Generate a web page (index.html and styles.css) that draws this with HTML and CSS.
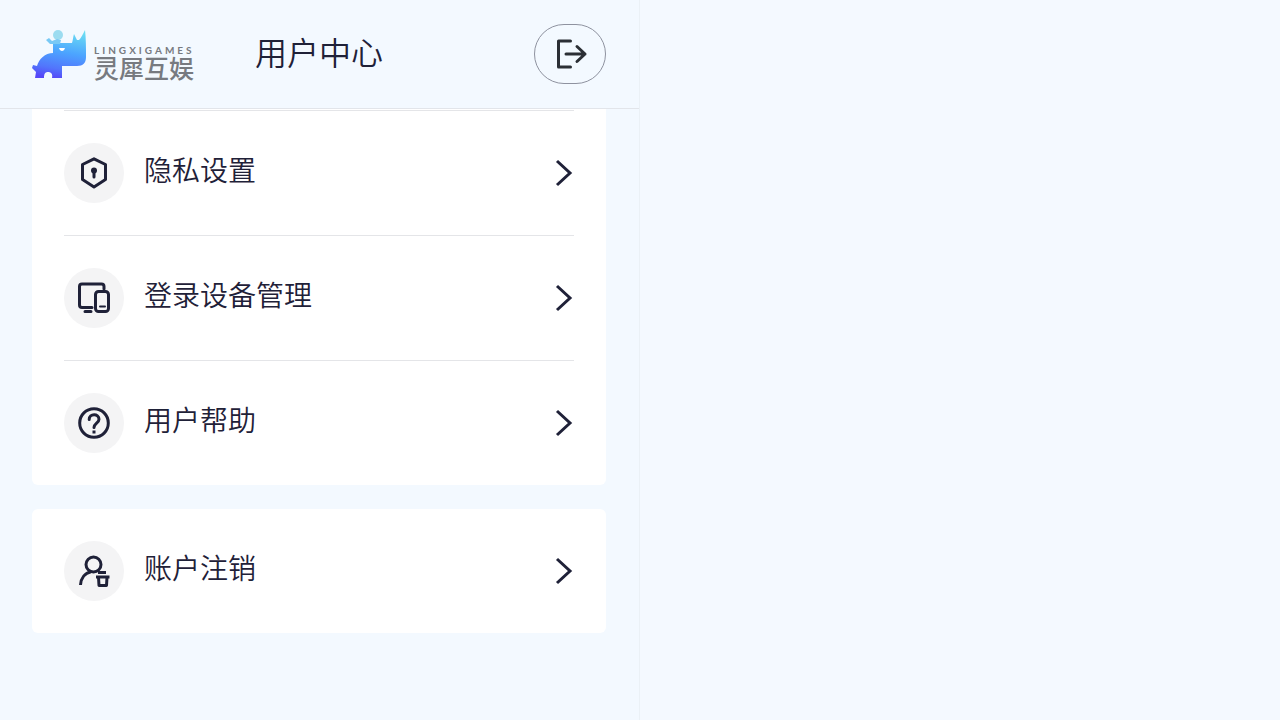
FILE: index.html
```html
<!DOCTYPE html>
<html lang="zh-CN">
<head>
<meta charset="utf-8">
<meta name="viewport" content="width=device-width, initial-scale=1">
<title>用户中心</title>
<link rel="stylesheet" href="styles.css">
</head>
<body>
<div class="app">
  <header class="topbar">
    <div class="brand">
      <svg class="brand-mark" viewBox="0 0 56 50" aria-hidden="true">
        <defs>
          <linearGradient id="rhino" x1="0.6" y1="0" x2="0.4" y2="1">
            <stop offset="0" stop-color="#6adcf3"/>
            <stop offset="0.45" stop-color="#4ca4ff"/>
            <stop offset="0.8" stop-color="#5275fc"/>
            <stop offset="1" stop-color="#5648f8"/>
          </linearGradient>
        </defs>
        <path fill="url(#rhino)" d="M3 49L4 43L0 39L1 36L5 37C7 30 13 24 21 24V14H40C41 11 41 8 42 5L45 11L47 11C49 9 51 5 53 1C54 9 54 19 54 28C54 34 51 37 45 37H30V49H20C21 45 19 43 16 43C13 43 12 45 12 49Z"/>
        <circle cx="26" cy="6" r="5" fill="#9cdcf0"/>
        <path fill="#78c9f5" d="M14 11L17 9L20 12L25 10L29 11L28 15H22L18 15Z"/>
        <path fill="#fff" d="M27 19H33C32 23 28 23 27 19Z"/>
      </svg>
      <div class="brand-text">
        <span class="brand-en">LINGXIGAMES</span>
        <span class="brand-cn">灵犀互娱</span>
      </div>
    </div>
    <h1 class="title">用户中心</h1>
    <button class="logout" type="button" aria-label="退出登录">
      <svg class="icon" viewBox="0 0 32 32" aria-hidden="true"><path d="M14.500 3H2.500V29H14.500M10 16H29M21 8.500L29 16L21 23.500"/></svg>
    </button>
  </header>
  <main class="content">
    <nav class="card card-continued">
      <a class="row" href="#privacy">
        <span class="badge"><svg class="icon" viewBox="0 0 32 32" aria-hidden="true"><path d="M16 1.800L27.500 7.500V22.500L16 30L4.500 22.500V7.500Z"/><circle cx="16" cy="13.500" r="3" fill="currentColor" stroke="none"/><path d="M16 14V20"/></svg></span>
        <span class="label">隐私设置</span>
        <svg class="chevron" viewBox="0 0 20 28" aria-hidden="true"><path d="M3 2L16 14L3 26"/></svg>
      </a>
      <a class="row" href="#devices">
        <span class="badge"><svg class="icon" viewBox="0 0 32 32" aria-hidden="true"><path d="M26 7V4.500Q26 2 23.500 2H4Q1.500 2 1.500 4.500V23Q1.500 25.500 4 25.500H14M7 29.500H13"/><rect x="17.500" y="9.500" width="13" height="20" rx="3"/><path stroke-width="2" d="M22 24.500H27"/></svg></span>
        <span class="label">登录设备管理</span>
        <svg class="chevron" viewBox="0 0 20 28" aria-hidden="true"><path d="M3 2L16 14L3 26"/></svg>
      </a>
      <a class="row" href="#help">
        <span class="badge"><svg class="icon" viewBox="0 0 32 32" aria-hidden="true"><circle cx="16" cy="16" r="14.300"/><path d="M11.200 12.500C11.200 6.200 21 6.200 21 12.200C21 16 16 16.200 16 20.500"/><path stroke-linecap="butt" d="M14.500 25H17.500"/></svg></span>
        <span class="label">用户帮助</span>
        <svg class="chevron" viewBox="0 0 20 28" aria-hidden="true"><path d="M3 2L16 14L3 26"/></svg>
      </a>
    </nav>
    <nav class="card">
      <a class="row" href="#close-account">
        <span class="badge"><svg class="icon" viewBox="0 0 32 32" aria-hidden="true"><circle cx="15.500" cy="9.500" r="7.500"/><path stroke-linecap="butt" d="M2.500 30C3 23 7 18 13 16.800M20 17.500H28M18 22H31.500"/><path stroke-linecap="butt" d="M20.500 22L21 30.500H28.500L29 22"/></svg></span>
        <span class="label">账户注销</span>
        <svg class="chevron" viewBox="0 0 20 28" aria-hidden="true"><path d="M3 2L16 14L3 26"/></svg>
      </a>
    </nav>
  </main>
</div>
</body>
</html>
```
FILE: styles.css
```css
* {
  box-sizing: border-box;
}

body {
  margin: 0;
  background: #f4f9ff;
  color: #1f2138;
  font-family: "Noto Sans CJK SC", sans-serif;
  font-weight: 350;
}

.app {
  width: 50%;
  min-height: 100vh;
  background: #f3f9ff;
  border-right: 1px solid #ebf1f6;
}

.topbar {
  display: grid;
  grid-template-columns: 1fr auto 1fr;
  align-items: center;
  padding: 24px 33px 24px 32px;
  border-bottom: 1px solid #e2e5ea;
}

.brand {
  display: flex;
  align-items: center;
  gap: 6px;
}

.brand-mark {
  width: 56px;
  height: 50px;
}

.brand-text {
  display: flex;
  flex-direction: column;
  padding-top: 16px;
  color: #777a80;
  white-space: nowrap;
}

.brand-en {
  font-family: Lato, sans-serif;
  font-size: 10px;
  font-weight: 700;
  line-height: 10px;
  letter-spacing: 3px;
}

.brand-cn {
  font-size: 25px;
  font-weight: 500;
  line-height: 24px;
}

.title {
  margin: 0;
  padding-bottom: 6px;
  font-size: 32px;
  font-weight: 350;
  line-height: 54px;
}

.logout {
  display: flex;
  align-items: center;
  justify-content: center;
  justify-self: end;
  width: 72px;
  height: 60px;
  padding: 0 0 0 4px;
  border: 1px solid #8e929f;
  border-radius: 30px;
  background: transparent;
  color: #2b2f35;
}

.icon {
  width: 32px;
  height: 32px;
  fill: none;
  stroke: currentColor;
  stroke-width: 3;
  stroke-linecap: round;
  stroke-linejoin: round;
}

.content {
  display: flex;
  flex-direction: column;
  gap: 24px;
  padding: 0 33px 32px 32px;
}

.card {
  padding: 0 32px;
  border-radius: 6px;
  background: #fff;
}

.card-continued {
  padding-top: 1px;
  border-radius: 0 0 6px 6px;
}

.row {
  display: flex;
  align-items: center;
  gap: 20px;
  padding: 32px 0;
  color: inherit;
  text-decoration: none;
}

.card-continued .row {
  border-top: 1px solid #e4e5e8;
}

.badge {
  display: flex;
  align-items: center;
  justify-content: center;
  width: 60px;
  height: 60px;
  border-radius: 50%;
  background: #f4f4f5;
}

.label {
  flex: 1;
  padding-bottom: 8px;
  font-size: 28px;
  line-height: 40px;
}

.chevron {
  width: 20px;
  height: 28px;
  fill: none;
  stroke: currentColor;
  stroke-width: 3;
}
```
